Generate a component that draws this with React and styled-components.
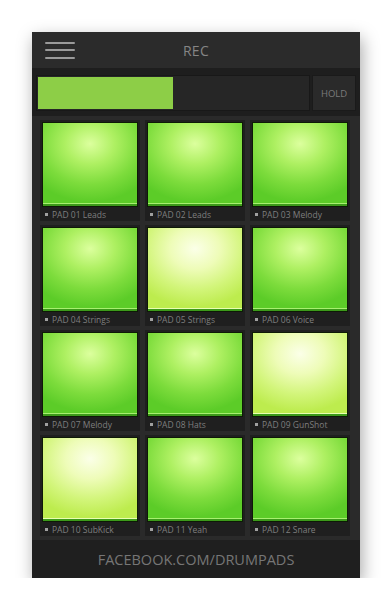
import React from 'react';
import styled, { createGlobalStyle } from 'styled-components';

const pads = [
    { name: 'PAD 01 Leads' },
    { name: 'PAD 02 Leads' },
    { name: 'PAD 03 Melody' },
    { name: 'PAD 04 Strings' },
    { name: 'PAD 05 Strings', lit: true },
    { name: 'PAD 06 Voice' },
    { name: 'PAD 07 Melody' },
    { name: 'PAD 08 Hats' },
    { name: 'PAD 09 GunShot', lit: true },
    { name: 'PAD 10 SubKick', lit: true },
    { name: 'PAD 11 Yeah' },
    { name: 'PAD 12 Snare' },
];

const App = () => {
    return (
        <>
            <GlobalStyle />
            <Page>
                <Screen>
                    <Header>
                        <MenuButton aria-label="menu">
                            <span />
                            <span />
                            <span />
                        </MenuButton>
                        <Title>REC</Title>
                    </Header>
                    <BarRow>
                        <Track>
                            <Fill style={{ width: '50%' }} />
                        </Track>
                        <HoldButton>HOLD</HoldButton>
                    </BarRow>
                    <Grid>
                        {pads.map((p) => (
                            <Cell key={p.name}>
                                <Pad lit={p.lit ? 1 : 0} />
                                <Label>
                                    <Bullet />
                                    {p.name}
                                </Label>
                            </Cell>
                        ))}
                    </Grid>
                    <Footer>FACEBOOK.COM/DRUMPADS</Footer>
                </Screen>
            </Page>
        </>
    );
};

export default App;

const GlobalStyle = createGlobalStyle`
    html, body {
        margin: 0;
        background: #fff;
    }
    body {
        font-family: "Open Sans", "Noto Sans", sans-serif;
    }
`;

const Page = styled.div`
    padding: 32px 0 0 32px;
`;

const Screen = styled.div`
    width: 328px;
    height: 546px;
    background: #2a2a2a;
    display: flex;
    flex-direction: column;
    box-shadow: 2px 6px 16px rgba(0, 0, 0, 0.35);
`;

const Header = styled.div`
    height: 36px;
    display: grid;
    grid-template-columns: 1fr auto 1fr;
    align-items: center;
    background: #2b2b2b;
`;

const MenuButton = styled.div`
    display: flex;
    flex-direction: column;
    gap: 5.5px;
    width: 30px;
    margin-left: 13px;

    span {
        display: block;
        height: 2px;
        background: #9a9a9a;
        border-radius: 1px;
    }
`;

const Title = styled.div`
    color: #858585;
    font-size: 14px;
    letter-spacing: 0.3px;
`;

const BarRow = styled.div`
    height: 48px;
    box-sizing: border-box;
    padding: 7px 4px 5px 4px;
    display: flex;
    gap: 2px;
    background: #1e1e1e;
`;

const Track = styled.div`
    flex: 1;
    display: flex;
    padding: 1px;
    background: #262626;
    border: 1px solid #181818;
`;

const Fill = styled.div`
    background: #8dce47;
`;

const HoldButton = styled.div`
    width: 42px;
    display: flex;
    align-items: center;
    justify-content: center;
    background: #2a2a2a;
    border: 1px solid #1a1a1a;
    color: #7a7a7a;
    font-size: 9.5px;
`;

const Grid = styled.div`
    flex: 1;
    display: grid;
    grid-template-columns: repeat(3, 100px);
    grid-auto-rows: 101px;
    column-gap: 5px;
    row-gap: 4px;
    padding: 4px 0 0 8px;
`;

const Cell = styled.div`
    display: flex;
    flex-direction: column;
    padding: 2px 2px 0 2px;
    background: #1f1f1f;
`;

const Pad = styled.div`
    height: 85px;
    border: 1px solid #0e1a06;
    box-sizing: border-box;
    background:
        linear-gradient(to top, #3c9a1a 0 2px, ${(p) => (p.lit ? '#e9ffb0' : '#a8f070')} 2px 3px, transparent 3px),
        ${(p) =>
            p.lit
                ? 'radial-gradient(ellipse 75% 70% at 50% 25%, #fbffe8 0%, #eefcb8 35%, #d2f57a 70%, #bdec4e 100%)'
                : 'radial-gradient(ellipse 75% 70% at 50% 25%, #dcff9e 0%, #aef062 35%, #7ddc3c 70%, #5ccc28 100%)'};
`;

const Label = styled.div`
    flex: 1;
    display: flex;
    align-items: center;
    gap: 4px;
    padding-left: 3px;
    color: #7e7e7e;
    font-size: 8.5px;
    white-space: nowrap;
`;

const Bullet = styled.span`
    width: 3px;
    height: 3px;
    background: #a0a0a0;
`;

const Footer = styled.div`
    height: 38px;
    display: flex;
    align-items: center;
    justify-content: center;
    background: #1f1f1f;
    color: #767676;
    font-size: 14.5px;
    margin-top: 4px;
`;
